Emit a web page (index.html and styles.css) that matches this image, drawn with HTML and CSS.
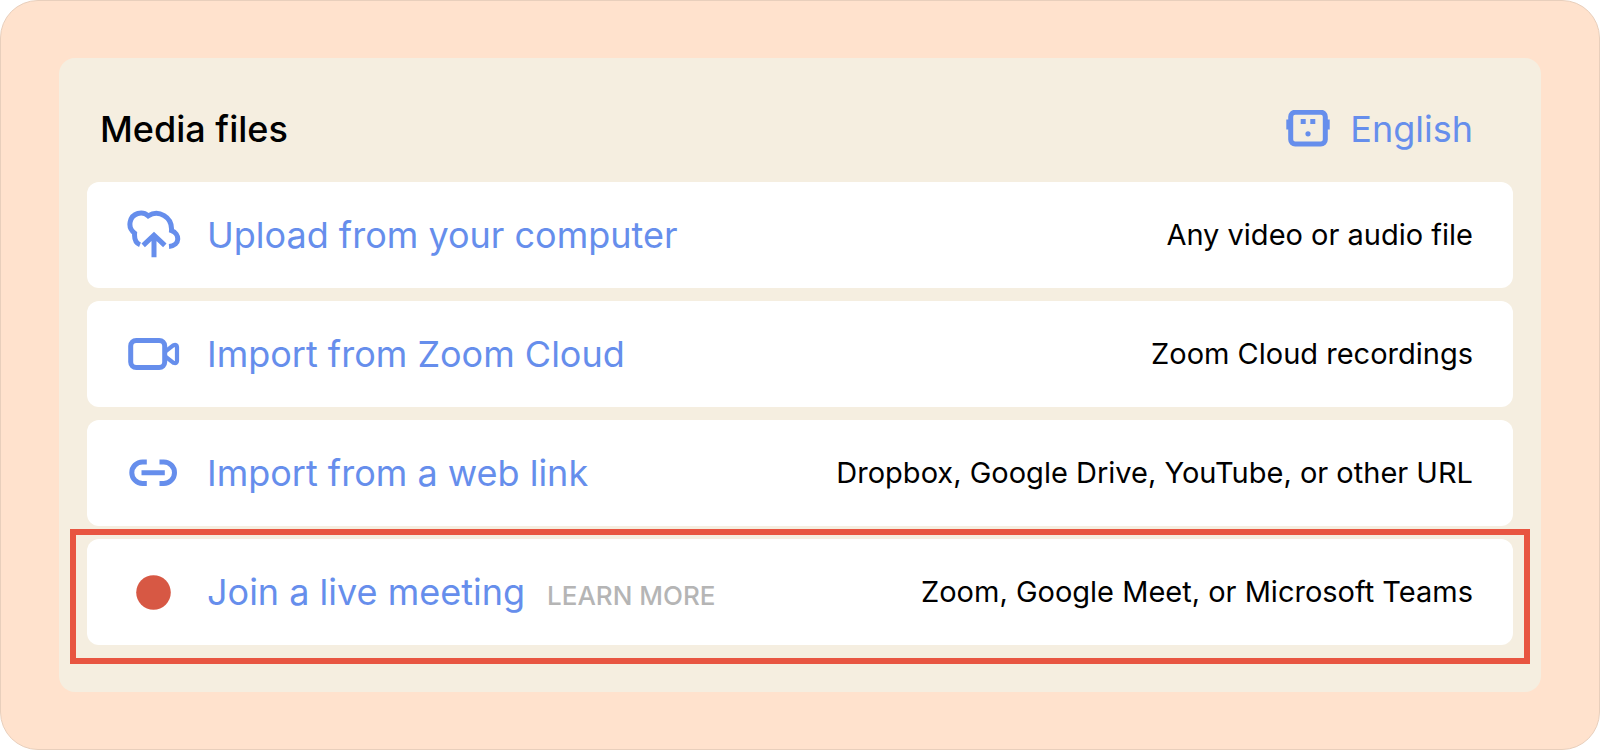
FILE: index.html
```html
<!DOCTYPE html>
<html lang="en">
<head>
    <meta charset="UTF-8">
    <meta name="viewport" content="width=device-width, initial-scale=1.0">
    <title>Media files</title>
    <link rel="stylesheet" href="styles.css">
</head>
<body>
    <main class="frame">
        <section class="panel">
            <header class="panel-header">
                <h1 class="title">Media files</h1>
                <button type="button" class="language">
                    <svg class="language-icon" width="44" height="38" viewBox="0 1 44 38" aria-hidden="true">
                        <rect x="4.7" y="3.2" width="34.6" height="31.8" rx="4.5" fill="none" stroke="currentColor" stroke-width="5"/>
                        <path d="M0.3 10.5h3v10h-3zM40.7 10.5h3v10h-3zM14.7 10h5v5h-5zM24.3 10h5v5h-5z" fill="currentColor"/>
                        <circle cx="22" cy="24.8" r="2.6" fill="currentColor"/>
                    </svg>
                    English
                </button>
            </header>
            <ul class="sources">
                <li class="source">
                    <svg class="icon" width="54" height="54" viewBox="0 -1 54 54" fill="none" stroke="currentColor" stroke-width="5" aria-hidden="true">
                        <path d="M13 35.8C9 34.2 7.2 29.5 7.6 24.2C3.4 21 2.4 16.5 3.2 12.8C5.2 3.7 15.5 1.8 21.2 6.8C31.5 0.5 45.5 7.5 44.5 21.6C52.8 24.5 53.6 36.6 42 37.4"/>
                        <path d="M27 48.3V27.5M16.2 36.4L27 26.2L37.8 36.4"/>
                    </svg>
                    <a href="#" class="name">Upload from your computer</a>
                    <span class="detail">Any video or audio file</span>
                </li>
                <li class="source">
                    <svg class="icon" width="54" height="54" viewBox="0 0 54 54" fill="none" stroke="currentColor" stroke-width="5" stroke-linejoin="round" aria-hidden="true">
                        <rect x="3.7" y="13.5" width="34" height="27" rx="5.5"/>
                        <path d="M38.5 24.4L46.5 18.2Q50 17.2 50 20V34Q50 36.8 46.5 35.8L38.5 29.6" stroke-width="4.2"/>
                    </svg>
                    <a href="#" class="name">Import from Zoom Cloud</a>
                    <span class="detail">Zoom Cloud recordings</span>
                </li>
                <li class="source">
                    <svg class="icon" width="54" height="54" viewBox="0 0 54 54" fill="none" stroke="currentColor" stroke-width="5" aria-hidden="true">
                        <path d="M19.8 16H15.5A10.7 10.7 0 0 0 15.5 37.4H19.8M32.5 16H36.8A10.7 10.7 0 0 1 36.8 37.4H32.5M14.5 26.7H37.8"/>
                    </svg>
                    <a href="#" class="name">Import from a web link</a>
                    <span class="detail">Dropbox, Google Drive, YouTube, or other URL</span>
                </li>
                <li class="source highlighted">
                    <svg class="icon record" width="54" height="54" viewBox="0 0 54 54" aria-hidden="true">
                        <circle cx="26.5" cy="27.5" r="17.3" fill="currentColor"/>
                    </svg>
                    <a href="#" class="name">Join a live meeting</a>
                    <a href="#" class="learn-more">LEARN MORE</a>
                    <span class="detail">Zoom, Google Meet, or Microsoft Teams</span>
                </li>
            </ul>
        </section>
    </main>
</body>
</html>
```
FILE: styles.css
```css
* {
    box-sizing: border-box;
}
body {
    margin: 0;
    background: #fff;
    color: #000;
    font-family: Inter, "Liberation Sans", sans-serif;
}
.frame {
    min-height: 100vh;
    padding: 57px 58px;
    border: 1px solid #e8cfbc;
    border-radius: 38px;
    background: #ffe2cd;
}
.panel {
    padding: 45px 28px 47px;
    border-radius: 16px;
    background: #f5eee0;
}
.panel-header {
    display: flex;
    align-items: center;
    justify-content: space-between;
    padding: 0 40px 0 13px;
    margin-bottom: 27px;
}
.title {
    margin: 0;
    font-size: 36px;
    line-height: 52px;
    font-weight: 500;
}
.language {
    display: flex;
    align-items: center;
    gap: 20px;
    padding: 0;
    border: none;
    background: none;
    color: #668eec;
    font: inherit;
    font-size: 36px;
    line-height: 52px;
    cursor: pointer;
}
.sources {
    display: flex;
    flex-direction: column;
    gap: 13px;
    margin: 0;
    padding: 0;
    list-style: none;
}
.source {
    position: relative;
    display: flex;
    align-items: center;
    min-height: 106px;
    padding: 0 40px;
    border-radius: 12px;
    background: #fff;
}
.icon {
    flex: none;
    margin-right: 26px;
    color: #668eec;
}
.icon.record {
    color: #d75844;
}
.name {
    color: #668eec;
    font-size: 36px;
    line-height: 52px;
    text-decoration: none;
}
.learn-more {
    margin: 8px 0 0 22px;
    color: #b5b5b5;
    font-size: 26px;
    line-height: 32px;
    font-weight: 500;
    text-decoration: none;
}
.detail {
    margin-left: auto;
    font-size: 29px;
    line-height: 40px;
    text-align: right;
}
.highlighted::after {
    content: "";
    position: absolute;
    inset: -10px -17px -19px;
    border: 6px solid #e85541;
    pointer-events: none;
}
```
